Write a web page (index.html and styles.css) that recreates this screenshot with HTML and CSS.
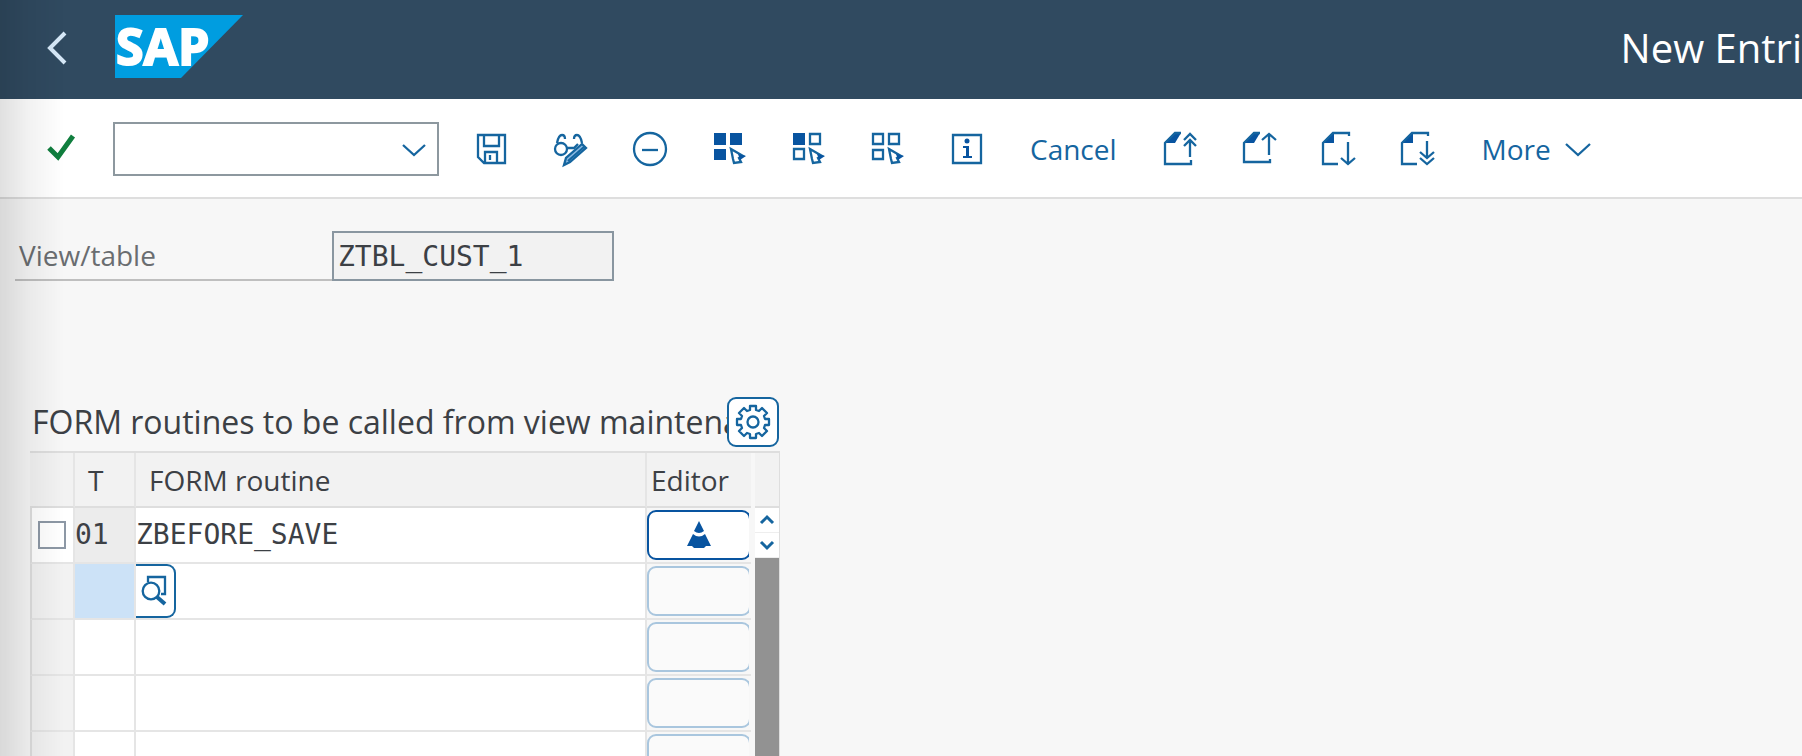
FILE: index.html
```html
<!DOCTYPE html>
<html lang="en">
<head>
<meta charset="utf-8">
<title>New Entries</title>
<link rel="stylesheet" href="styles.css">
</head>
<body>
<header class="shell">
  <button class="icon-btn back" aria-label="Back"><svg width="20" height="32" viewBox="0 0 20 32"><path d="M18 1 3 16l15 15" stroke="#d6e8f7" stroke-width="4"/></svg></button>
  <svg class="logo" width="128" height="63" viewBox="0 0 128 63" role="img" aria-label="SAP"><path class="logo-shape" d="M0 0h128L66 63H0z"/><text x="1" y="50" class="logo-text">SAP</text></svg>
  <h1 class="shell-title">New Entri</h1>
</header>

<div class="toolbar" role="toolbar">
  <button class="icon-btn" aria-label="Enter"><svg width="30" height="30" viewBox="0 0 30 30"><path d="m2 14 9 9L26 2" stroke="#107e3e" stroke-width="5"/></svg></button>
  <div class="combo">
    <input class="combo-input" type="text" aria-label="Command">
    <button class="icon-btn" aria-label="Show commands"><svg width="24" height="12" viewBox="0 0 24 12"><path d="m1 2 11 10L23 2"/></svg></button>
  </div>
  <div class="actions">
    <button class="icon-btn" aria-label="Save"><svg width="34" height="34" viewBox="0 0 34 34"><path d="M3 3h27v28H9l-6-6zM9 3v11h15V3M10 31V20h12v11M15 23v5"/></svg></button>
    <button class="icon-btn" aria-label="Display or change"><svg width="34" height="34" viewBox="0 0 34 34"><circle cx="7" cy="17" r="6"/><path d="M3 11C4 6 6 3 8 3q3 0 3 4M13 16h7l4-4M20 7q0-4 3-4c3 0 4 3 5 8"/><path d="m28 12 4 4-16 14-6 3 2-7z" fill="#8dbbe3"/><path d="m14 29 16-14"/></svg></button>
    <button class="icon-btn" aria-label="Delete"><svg width="34" height="34" viewBox="0 0 34 34"><circle cx="17" cy="17" r="16"/><path d="M9 18h16"/></svg></button>
    <button class="icon-btn" aria-label="Select all"><svg width="34" height="34" viewBox="0 0 34 34"><path class="solid" d="M2 1h12v12H2zM18 1h12v12H18zM2 17h12v11H2z"/><path d="m19 17 12 7-4 2 2 4-7 1-1-4z"/><path class="solid" d="m26 22 8 2-6 4z"/></svg></button>
    <button class="icon-btn" aria-label="Select block"><svg width="34" height="34" viewBox="0 0 34 34"><path class="solid" d="M2 1h12v12H2z"/><path d="M19 2h10v10H19zM3 17h10v10H3zM19 17l12 7-4 2 2 4-7 1-1-4z"/><path class="solid" d="m26 22 8 2-6 4z"/></svg></button>
    <button class="icon-btn" aria-label="Deselect all"><svg width="34" height="34" viewBox="0 0 34 34"><path d="M3 2h10v10H3zM19 2h10v10H19zM3 18h10v9H3zM19 17l12 7-4 2 2 4-7 1-1-4z"/><path class="solid" d="m26 22 8 2-6 4z"/></svg></button>
    <button class="icon-btn" aria-label="Information"><svg width="34" height="34" viewBox="0 0 34 34"><path d="M4 3h28v28H4z"/><circle class="solid" cx="18" cy="9" r="2.500"/><path class="solid" d="M14 14h6v10h3v2h-9v-2h3v-8h-3z"/></svg></button>
    <button class="text-btn">Cancel</button>
    <button class="icon-btn" aria-label="First page"><svg width="34" height="34" viewBox="0 0 34 34"><path class="solid" d="M1 10 10 1h7l-6 10H1z"/><path d="M17 1h-6L1 11v21h26v-4M26 25V9M20 14l6-6 6 6M20 8l6-6 6 6"/></svg></button>
    <button class="icon-btn" aria-label="Previous page"><svg width="34" height="34" viewBox="0 0 34 34"><path class="solid" d="M1 10 10 1h7l-6 10H1z"/><path d="M17 1h-6L1 11v19h26v-3M26 23V2M19 8l7-6 7 6"/></svg></button>
    <button class="icon-btn" aria-label="Next page"><svg width="34" height="34" viewBox="0 0 34 34"><path class="solid" d="M1 10 10 1h2v10H1z"/><path d="M27 4V1H11L1 11v21h15M26 10v22M19 26l7 6 7-6"/></svg></button>
    <button class="icon-btn" aria-label="Last page"><svg width="34" height="34" viewBox="0 0 34 34"><path class="solid" d="M1 10 10 1h2v10H1z"/><path d="M27 4V1H11L1 11v21h15M26 9v17M19 20l7 6 7-6M19 26l7 6 7-6"/></svg></button>
    <button class="text-btn">More<svg width="26" height="14" viewBox="0 0 26 14"><path d="m1 2 12 11L25 2"/></svg></button>
  </div>
</div>

<main class="page">
  <div class="field">
    <label class="field-label" for="view">View/table</label>
    <input class="field-input" id="view" type="text" value="ZTBL_CUST_1" readonly>
  </div>

  <section class="panel">
    <div class="panel-head">
      <h2 class="panel-title">FORM routines to be called from view maintena</h2>
      <button class="settings" aria-label="Settings"><svg width="34" height="34" viewBox="0 0 34 34"><circle cx="17" cy="17" r="5.500"/><path d="M14 1h6v4l3 1 3-3 5 5-3 3 1 3h4v6h-4l-1 3 3 3-5 5-3-3-3 1v4h-6v-4l-3-1-3 3-5-5 3-3-1-3H1v-6h4l1-3-3-3 5-5 3 3 3-1z" stroke-linejoin="round"/></svg></button>
    </div>
    <div class="grid">
      <table class="table">
        <colgroup><col class="col-pick"><col class="col-type"><col><col class="col-editor"></colgroup>
        <thead>
          <tr><th></th><th class="th-type">T</th><th class="th-routine">FORM routine</th><th class="th-editor">Editor</th></tr>
        </thead>
        <tbody>
          <tr><td class="pick pick-on"><input class="check" type="checkbox" aria-label="Select row 01"></td><td class="mono fixed">01</td><td class="mono">ZBEFORE_SAVE</td><td><div class="clip"><button class="edit edit-on" aria-label="Editor"><svg width="26" height="28" viewBox="0 0 26 28"><path class="solid" d="m13 0 5 10q-5 4-10 0zM7 13q6 5 12 0l6 12h-5l-2 2H8l-2-2H1z"/></svg></button></div></td></tr>
          <tr><td class="pick"></td><td class="current"></td><td><button class="help" aria-label="Value help"><svg width="28" height="32" viewBox="0 0 28 32"><circle cx="10" cy="16" r="8.300"/><path d="M7 7V2h17v17h-4"/><path d="m16 22 8 7" stroke-width="4"/></svg></button></td><td><div class="clip"><button class="edit" disabled aria-label="Editor"></button></div></td></tr>
          <tr><td class="pick"></td><td></td><td></td><td><div class="clip"><button class="edit" disabled aria-label="Editor"></button></div></td></tr>
          <tr><td class="pick"></td><td></td><td></td><td><div class="clip"><button class="edit" disabled aria-label="Editor"></button></div></td></tr>
          <tr><td class="pick"></td><td></td><td></td><td><div class="clip"><button class="edit" disabled aria-label="Editor"></button></div></td></tr>
        </tbody>
      </table>
      <div class="scroll">
        <div class="scroll-head"></div>
        <button class="scroll-btn" aria-label="Scroll up"><svg width="14" height="10" viewBox="0 0 14 10"><path d="m1 8 6-6 6 6" stroke-width="3"/></svg></button>
        <button class="scroll-btn" aria-label="Scroll down"><svg width="14" height="10" viewBox="0 0 14 10"><path d="m1 2 6 6 6-6" stroke-width="3"/></svg></button>
        <div class="scroll-thumb"></div>
      </div>
    </div>
  </section>
</main>
</body>
</html>
```
FILE: styles.css
```css
:root {
  --blue: #0854a0;
  --icon: #15659f;
  --line: #dedede;
  --text: #3c4045;
}

* {
  box-sizing: border-box;
}

body {
  display: flex;
  flex-direction: column;
  height: 100vh;
  margin: 0;
  overflow: hidden;
  background: #f7f7f7;
  color: var(--text);
  font: 28px/36px "Open Sans", "Noto Sans", sans-serif;
}

/* soft shadow along the left window edge */
body::before {
  content: "";
  position: fixed;
  inset: 0 auto 0 0;
  width: 64px;
  background: linear-gradient(90deg, rgba(0, 0, 0, 0.12), rgba(0, 0, 0, 0.05) 45%, rgba(0, 0, 0, 0));
  pointer-events: none;
  z-index: 1;
}

button,
input {
  margin: 0;
  padding: 0;
  border: 0;
  border-radius: 0;
  background: none;
  color: inherit;
  font: inherit;
}

svg {
  display: block;
  flex: none;
  overflow: visible;
  fill: none;
  stroke: var(--icon);
  stroke-width: 2.3;
}

.solid {
  fill: var(--blue);
  stroke: none;
}

.shell {
  display: flex;
  flex: none;
  align-items: center;
  height: 99px;
  padding-left: 47px;
  background: #304a60;
}

.back {
  margin: 0 48px 4px 0;
}

.logo {
  margin-bottom: 6px;
}

.logo-shape {
  fill: #009de0;
  stroke: none;
}

.logo-text {
  fill: #fff;
  stroke: #fff;
  stroke-width: 2;
  font-size: 50px;
  font-weight: 700;
}

.shell-title {
  margin: 0 0 4px auto;
  color: #fff;
  font-size: 40px;
  font-weight: 400;
  line-height: 48px;
  white-space: nowrap;
}

.toolbar {
  display: flex;
  flex: none;
  align-items: center;
  gap: 36px;
  height: 100px;
  padding-left: 47px;
  padding-top: 2px;
  border-bottom: 2px solid var(--line);
  background: #fff;
}

.combo {
  display: flex;
  align-items: center;
  width: 326px;
  height: 54px;
  padding-right: 11px;
  border: 2px solid #8d989f;
}

.combo-input {
  flex: 1;
  min-width: 0;
  height: 100%;
}

.actions {
  display: flex;
  align-items: center;
  gap: 45px;
}

.text-btn {
  display: flex;
  align-items: center;
  gap: 14px;
  padding: 0 2px;
  color: var(--icon);
  white-space: nowrap;
}

.page {
  flex: 1;
  min-height: 0;
  padding: 32px 15px 0;
}

.field {
  display: flex;
  height: 50px;
}

.field-label {
  width: 317px;
  padding: 6px 4px;
  border-bottom: 2px solid #bfbfbf;
  color: #6a6d70;
}

.field-input {
  width: 282px;
  padding: 2px 4px 0;
  border: 2px solid #8996a0;
  background: #f2f2f2;
}

.field-input,
.mono {
  font-family: "DejaVu Sans Mono", monospace;
}

.panel {
  width: 750px;
  margin: 116px 0 0 15px;
}

.panel-head {
  display: flex;
  align-items: center;
  height: 54px;
  padding: 0 1px 4px 2px;
}

.panel-title {
  flex: 1;
  min-width: 0;
  margin: 0;
  font-size: 32px;
  font-weight: 400;
  line-height: 44px;
  white-space: nowrap;
}

.settings {
  display: grid;
  flex: none;
  place-items: center;
  width: 52px;
  height: 50px;
  border: 2px solid var(--icon);
  border-radius: 9px;
  background: #fff;
}

.grid {
  display: flex;
  gap: 4px;
  border-top: 2px solid var(--line);
}

.table {
  flex: 1;
  min-width: 0;
  border-collapse: separate;
  border-spacing: 0;
  table-layout: fixed;
}

.col-pick {
  width: 45px;
}

.col-type {
  width: 61px;
}

.col-editor {
  width: 104px;
}

th {
  height: 55px;
  padding: 0;
  border-right: 2px solid #e5e5e5;
  border-bottom: 2px solid var(--line);
  background: #f2f2f2;
  font-weight: 400;
  text-align: left;
  white-space: nowrap;
}

.th-type,
.th-routine {
  padding-left: 13px;
}

.th-editor {
  padding-left: 4px;
}

th:last-child,
td:last-child {
  border-right: 0;
}

td {
  height: 56px;
  padding: 0;
  border-right: 2px solid #e5e5e5;
  border-bottom: 2px solid #e5e5e5;
  background: #fff;
}

td:last-child {
  background: #f7f7f7;
}

.pick {
  padding-left: 6px;
  border-left: 2px solid var(--line);
  background: #f2f2f2;
}

.pick-on {
  background: #fff;
}

.fixed {
  background: #ececec;
}

.current {
  background: #cce2f7;
}

.check {
  display: block;
  width: 28px;
  height: 28px;
  border: 2px solid #8d98a5;
  background: #fff;
  appearance: none;
}

.clip {
  width: 102px;
  overflow: hidden;
}

.edit {
  display: grid;
  place-items: center;
  width: 104px;
  height: 50px;
  border: 2px solid #a9c6de;
  border-radius: 9px;
  background: #fafafa;
}

.edit-on {
  border-color: var(--blue);
  background: #fff;
}

.help {
  display: grid;
  place-items: center;
  width: 40px;
  height: 54px;
  border: 2px solid var(--icon);
  border-left: 0;
  border-radius: 0 9px 9px 0;
}

.scroll {
  display: flex;
  flex-direction: column;
  width: 25px;
  border-right: 1px solid var(--line);
}

.scroll-head {
  height: 55px;
  border-bottom: 2px solid var(--line);
  background: #f2f2f2;
}

.scroll-btn {
  display: grid;
  place-items: center;
  height: 25px;
  border-bottom: 1px solid #eee;
  background: #fff;
}

.scroll-thumb {
  flex: 1;
  background: #929292;
}
```
